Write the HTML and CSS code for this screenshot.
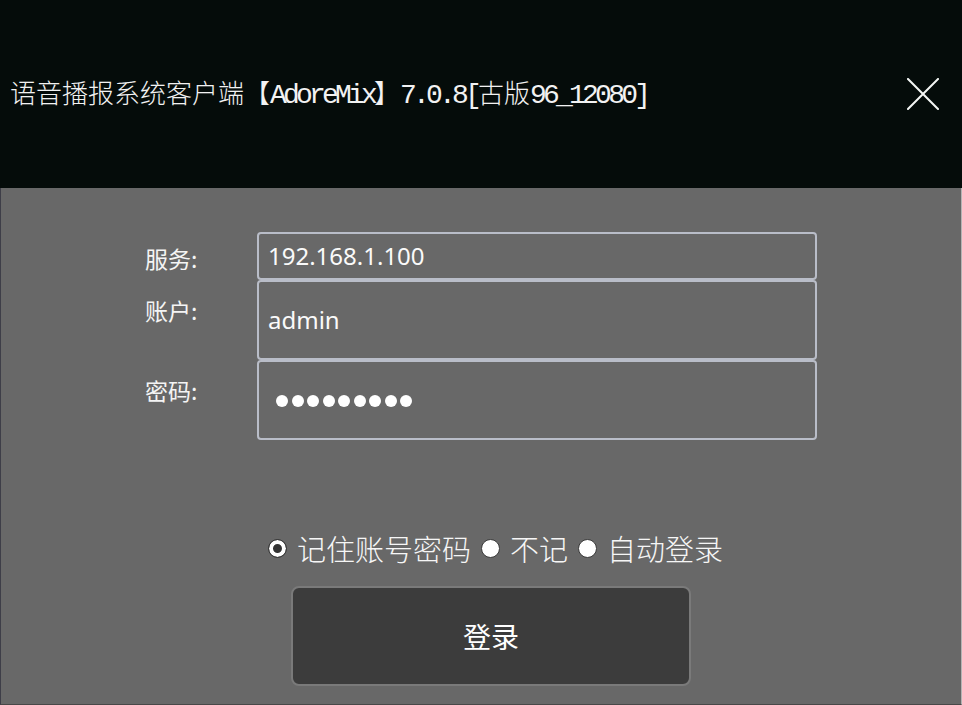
FILE: index.html
```html
<!DOCTYPE html>
<html lang="zh-CN">
<head>
<meta charset="utf-8">
<title>语音播报系统客户端</title>
<link rel="stylesheet" href="styles.css">
</head>
<body>
<div class="window">
  <header class="titlebar">
    <div class="title">语音播报系统客户端【<span class="lat">AdoreMix</span>】<span class="lat">7.0.8[</span>古版<span class="lat">96_12080]</span></div>
    <svg class="close" width="32" height="32" viewBox="0 0 32 32" aria-label="关闭">
      <path d="M1 1 L31 31 M31 1 L1 31" stroke="#f4f6f4" stroke-width="2" stroke-linecap="square" fill="none"/>
    </svg>
  </header>
  <main class="body">
    <div class="form">
      <div class="label l1">服务:</div>
      <div class="field f1"><span class="val">192.168.1.100</span></div>
      <div class="label l2">账户:</div>
      <div class="field f2"><span class="val">admin</span></div>
      <div class="label l3">密码:</div>
      <div class="field f3"><span class="dots"><i></i><i></i><i></i><i></i><i></i><i></i><i></i><i></i><i></i></span></div>
    </div>
    <div class="options">
      <span class="radio checked"></span><span class="opt">记住账号密码</span>
      <span class="radio"></span><span class="opt">不记</span>
      <span class="radio"></span><span class="opt">自动登录</span>
    </div>
    <button class="login">登录</button>
  </main>
</div>
</body>
</html>
```
FILE: styles.css
```css
html, body {
  margin: 0;
  padding: 0;
  background: #686868;
}
.window {
  width: 962px;
  height: 705px;
  display: flex;
  flex-direction: column;
  overflow: hidden;
}
.titlebar {
  height: 188px;
  flex: none;
  background: #050c0a;
  display: flex;
  align-items: center;
  justify-content: space-between;
  padding: 0 23px 0 10px;
  box-sizing: border-box;
}
.title {
  color: #f2f2f2;
  font-family: "Noto Sans CJK SC", sans-serif;
  font-size: 26px;
  line-height: 32px;
  white-space: nowrap;
  font-weight: 300;
}
.title .lat {
  font-family: "Liberation Mono", monospace;
  letter-spacing: -3.8px;
  font-size: 28px;
  font-weight: 400;
}
.close {
  display: block;
}
.body {
  flex: 1;
  background: #686868;
  border-left: 1px solid #3e3e48;
  border-right: 1px solid #b4b4b4;
  border-bottom: 1px solid #484848;
  display: flex;
  flex-direction: column;
  padding-top: 44px;
}
.form {
  display: grid;
  grid-template-columns: 112px 560px;
  margin-left: 144px;
}
.label {
  color: #f4f4f4;
  font-family: "Noto Sans CJK SC", sans-serif;
  font-size: 23px;
  line-height: 28px;
}
.l1 { padding-top: 12px; }
.l2 { padding-top: 16px; }
.l3 { padding-top: 16px; }
.field {
  box-sizing: border-box;
  border: 2px solid #b9bdc8;
  border-radius: 4px;
  display: flex;
  align-items: center;
  padding-left: 9px;
  color: #fafafa;
  font-family: "Noto Sans", sans-serif;
  font-size: 24px;
}
.f1 { height: 48px; }
.f2 { height: 80px; }
.f3 { height: 80px; padding-left: 17px; padding-top: 2px; }
.val { line-height: 30px; }
.dots {
  display: flex;
  gap: 3.5px;
}
.dots i {
  display: block;
  width: 12px;
  height: 12px;
  border-radius: 50%;
  background: #ffffff;
}
.options {
  display: flex;
  align-items: center;
  margin-top: 90px;
  margin-left: 267px;
  height: 36px;
  color: #f6f6f6;
  font-family: "Noto Sans CJK SC", sans-serif;
  font-size: 29px;
  font-weight: 300;
}
.radio {
  width: 19px;
  height: 19px;
  box-sizing: border-box;
  border-radius: 50%;
  background: #ffffff;
  border: 1px solid #3a3a3a;
  margin-right: 10px;
  flex: none;
}
.radio.checked {
  background: #333333;
  box-shadow: inset 0 0 0 4px #ffffff;
}
.opt {
  margin-right: 10px;
  line-height: 36px;
}
.login {
  margin-top: 20px;
  margin-left: 290px;
  width: 400px;
  height: 100px;
  box-sizing: border-box;
  background: #3c3c3c;
  border: 2px solid #7a7a7a;
  border-radius: 8px;
  color: #ffffff;
  font-family: "Noto Sans CJK SC", sans-serif;
  font-size: 28px;
  padding: 0;
}
```
